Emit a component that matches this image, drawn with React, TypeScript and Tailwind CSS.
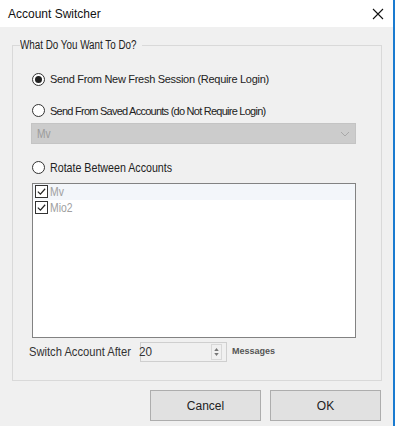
import { useState } from 'react';

const font = { fontFamily: '"Liberation Sans", Arial, sans-serif' };

function Radio({ checked }: { checked?: boolean }) {
  return (
    <span className="flex h-[13px] w-[13px] shrink-0 items-center justify-center rounded-full border border-[#333] bg-white">
      {checked && <span className="h-[7px] w-[7px] rounded-full bg-[#222]" />}
    </span>
  );
}

function Check() {
  return (
    <span className="flex h-[13px] w-[13px] shrink-0 items-center justify-center border border-[#333] bg-white">
      <svg viewBox="0 0 12 12" className="h-[11px] w-[11px]">
        <path d="M2 6.2 L4.8 9 L10 3" fill="none" stroke="#222" strokeWidth="1.3" />
      </svg>
    </span>
  );
}

export default function App() {
  const [mode, setMode] = useState(0);
  const accounts = ['Mv', 'Mio2'];

  return (
    <div className="flex h-[426px] w-[395px] flex-col border-r-2 border-[#1a7bd0] bg-[#f0f0f0] text-[#222]" style={font}>
      {/* title bar */}
      <div className="flex h-[27px] items-center justify-between bg-white pl-[8px] pr-[9px]">
        <span className="text-[12px] text-[#111]">Account Switcher</span>
        <svg viewBox="0 0 12 12" className="h-[12px] w-[12px]">
          <path d="M1 1 L11 11 M11 1 L1 11" stroke="#111" strokeWidth="1.1" />
        </svg>
      </div>

      {/* group box */}
      <fieldset className="ml-[12px] mr-[11px] mt-[9px] h-[345px] border border-[#d9d9d9] pl-[19px] pr-[25px]">
        <legend className="-ml-[12px] w-[122px] whitespace-nowrap text-[12px] text-[#222]">
          <span className="inline-block origin-left scale-x-[0.82]">What Do You Want To Do?</span>
        </legend>

        <label className="mt-[17px] flex items-center gap-[5px] text-[11px] tracking-[-0.3px]" onClick={() => setMode(0)}>
          <Radio checked={mode === 0} />
          <span>Send From New Fresh Session (Require Login)</span>
        </label>

        <label className="mt-[15px] flex items-center gap-[5px] text-[11px] tracking-[-0.75px]" onClick={() => setMode(1)}>
          <Radio checked={mode === 1} />
          <span>Send From Saved Accounts (do Not Require Login)</span>
        </label>

        <div className="-ml-[1px] mt-[4px] flex h-[21px] items-center justify-between border border-[#c4c4c4] bg-[#cccccc] pl-[5px] pr-[5px]">
          <span className="inline-block origin-left scale-x-[0.85] text-[12px] text-[#9a9a9a]">Mv</span>
          <svg viewBox="0 0 10 6" className="h-[6px] w-[10px]">
            <path d="M1 1 L5 5 L9 1" fill="none" stroke="#a8a8a8" strokeWidth="1" />
          </svg>
        </div>

        <label className="mt-[14px] flex items-center gap-[5px] text-[13px] whitespace-nowrap" onClick={() => setMode(2)}>
          <Radio checked={mode === 2} />
          <span className="inline-block origin-left scale-x-[0.82]">Rotate Between Accounts</span>
        </label>

        <div className="mt-[5px] h-[155px] border border-[#828282] bg-white">
          {accounts.map((a, i) => (
            <div key={a} className={`flex h-[16px] items-center gap-[2px] pl-[2px] ${i === 0 ? 'bg-[#f3f6fa]' : ''}`}>
              <Check />
              <span className="inline-block origin-left scale-x-[0.8] text-[13px] leading-none text-[#a0a0a0]">{a}</span>
            </div>
          ))}
        </div>

        <div className="-ml-[3px] mt-[4px] flex items-center">
          <span className="w-[111px] whitespace-nowrap text-[13px] text-[#333]">
            <span className="inline-block origin-left scale-x-[0.86]">Switch Account After</span>
          </span>
          <div className="flex h-[20px] w-[87px] items-center justify-between border border-[#cfcfcf] bg-[#f0f0f0]">
            <span className="-ml-[2px] inline-block origin-left scale-x-[0.9] text-[13px] text-[#333]">20</span>
            <div className="mr-[4px] flex h-[16px] w-[11px] flex-col items-center justify-center gap-[2px] border border-[#d8d8d8]">
              <svg viewBox="0 0 6 4" className="h-[3px] w-[5px]"><path d="M0 4 L3 0 L6 4Z" fill="#777" /></svg>
              <svg viewBox="0 0 6 4" className="h-[3px] w-[5px]"><path d="M0 0 L3 4 L6 0Z" fill="#777" /></svg>
            </div>
          </div>
          <span className="ml-[5px] text-[9px] font-bold text-[#555]">Messages</span>
        </div>
      </fieldset>

      {/* buttons */}
      <div className="mt-[9px] flex justify-end gap-[9px] pr-[12px]">
        <button className="h-[31px] w-[111px] border border-[#adadad] bg-[#e1e1e1] text-[12px] text-[#222]">Cancel</button>
        <button className="h-[31px] w-[111px] border border-[#adadad] bg-[#e1e1e1] text-[12px] text-[#222]">OK</button>
      </div>
    </div>
  );
}
